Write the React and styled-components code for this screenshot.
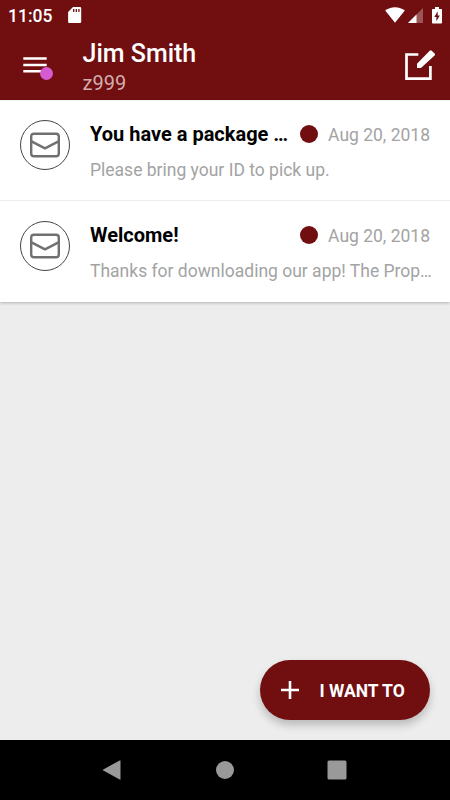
import React from "react";
import styled, { createGlobalStyle } from "styled-components";

const messages = [
  {
    id: 1,
    title: "You have a package …",
    date: "Aug 20, 2018",
    preview: "Please bring your ID to pick up.",
  },
  {
    id: 2,
    title: "Welcome!",
    date: "Aug 20, 2018",
    preview: "Thanks for downloading our app! The Prop…",
  },
];

export default function App() {
  return (
    <Screen>
      <GlobalStyle />
      <StatusBar>
        <Clock>11:05</Clock>
        <SdCardIcon />
        <StatusIcons>
          <WifiIcon />
          <SignalIcon />
          <BatteryIcon />
        </StatusIcons>
      </StatusBar>
      <Header>
        <MenuBtn aria-label="Menu">
          <MenuIcon />
          <MenuBadge />
        </MenuBtn>
        <User>
          <UserName>Jim Smith</UserName>
          <UserUnit>z999</UserUnit>
        </User>
        <ComposeBtn aria-label="Compose">
          <ComposeIcon />
        </ComposeBtn>
      </Header>
      <List>
        {messages.map((message) => (
          <Row key={message.id}>
            <Avatar>
              <MailIcon />
            </Avatar>
            <Content>
              <TitleLine>
                <Title>{message.title}</Title>
                <UnreadDot />
                <SentDate>{message.date}</SentDate>
              </TitleLine>
              <Preview>{message.preview}</Preview>
            </Content>
          </Row>
        ))}
      </List>
      <Body>
        <ActionBtn>
          <PlusIcon />
          <ActionLabel>I WANT TO</ActionLabel>
        </ActionBtn>
      </Body>
      <NavBar>
        <NavBtn aria-label="Back">
          <svg width="24" height="24" viewBox="0 0 24 24">
            <path d="M19.500 2.900V21.200q0 .8-.8.400L2.300 12.600q-.9-.6 0-1.200L18.700 2.400q.8-.3.8.5z" fill="#999" />
          </svg>
        </NavBtn>
        <NavBtn aria-label="Home">
          <svg width="24" height="24" viewBox="0 0 24 24">
            <circle cx="12" cy="12" r="9" fill="#999" />
          </svg>
        </NavBtn>
        <NavBtn aria-label="Recents">
          <svg width="24" height="24" viewBox="0 0 24 24">
            <rect x="2.500" y="2.500" width="19" height="19" rx="1.500" fill="#999" />
          </svg>
        </NavBtn>
      </NavBar>
    </Screen>
  );
}

function SdCardIcon() {
  return (
    <svg width="14" height="16" viewBox="0 0 14 16">
      <path d="M5 0H12a1.200 1.200 0 0 1 1.200 1.200V14.700a1.200 1.200 0 0 1-1.200 1.200H1.300a1.200 1.200 0 0 1-1.200-1.200V5z" fill="#fff" />
      <path d="M5.700 2v3M8.300 2v3M10.900 2v3" stroke="#710e10" strokeWidth="1.300" />
    </svg>
  );
}

function WifiIcon() {
  return (
    <svg width="20" height="16" viewBox="0 0 20 16">
      <path d="M10 15.700L.2 3.500C2.600 1.500 6.100.2 10 .2s7.400 1.300 9.800 3.300z" fill="#fff" />
    </svg>
  );
}

function SignalIcon() {
  return (
    <svg width="15" height="15" viewBox="0 0 15 15">
      <path d="M0 15L15 0v15z" fill="#fff" fillOpacity="0.300" />
      <path d="M0 15L8.500 6.500V15z" fill="#fff" />
    </svg>
  );
}

function BatteryIcon() {
  return (
    <svg width="10" height="17" viewBox="0 0 10 17">
      <path d="M3 0h4v1.900h2.200q.8 0 .8.800v13q0 .8-.8.800H.8q-.8 0-.8-.8v-13q0-.8.8-.8H3z" fill="#fff" />
      <path d="M5.700 4.300L2.300 10h2.100v4.300L7.800 8.500H5.700z" fill="#710e10" />
    </svg>
  );
}

function MenuIcon() {
  return (
    <svg width="24" height="16" viewBox="0 0 24 16">
      <path d="M.3 1.500h23.400M.3 8h23.400M.3 14.300h23.400" stroke="#fff" strokeWidth="2.600" />
    </svg>
  );
}

function ComposeIcon() {
  return (
    <svg width="32" height="32" viewBox="0 0 32 32">
      <path d="M14.300 4.500H2.500v24.200h23.900V16" fill="none" stroke="#fff" strokeWidth="2.700" />
      <path d="M13 13.700L25.700.8q1-.9 2 0L30.600 3.400q.9 1 0 2L17.500 17.500q-.6.500-1.400.5H13z" fill="#fff" />
    </svg>
  );
}

function MailIcon() {
  return (
    <svg width="30" height="26" viewBox="0 0 30 26">
      <rect x="1.200" y="1.700" width="27.600" height="22.600" rx="2.800" fill="none" stroke="#707070" strokeWidth="2.400" />
      <path d="M1 9.200L15 16.300 29 9.200" fill="none" stroke="#707070" strokeWidth="2.500" strokeLinejoin="round" />
    </svg>
  );
}

function PlusIcon() {
  return (
    <svg width="18" height="18" viewBox="0 0 18 18">
      <path d="M9 0v18M0 9h18" stroke="#fff" strokeWidth="2.600" />
    </svg>
  );
}

const GlobalStyle = createGlobalStyle`
  * {
    box-sizing: border-box;
  }
  body {
    margin: 0;
    font-family: Roboto, sans-serif;
  }
  svg {
    display: block;
    flex-shrink: 0;
  }
  button {
    border: 0;
    padding: 0;
    background: transparent;
    font-family: inherit;
  }
`;
const Screen = styled.div`
  display: flex;
  flex-direction: column;
  width: 450px;
  height: 800px;
  overflow: hidden;
  background-color: #ededed;
`;
const StatusBar = styled.div`
  display: flex;
  align-items: center;
  height: 30px;
  padding: 0 8px;
  background-color: #710e10;
`;
const Clock = styled.span`
  width: 60px;
  color: #fff;
  font-size: 17.500px;
  font-weight: 500;
  line-height: 30px;
  padding-top: 1px;
`;
const StatusIcons = styled.div`
  display: flex;
  align-items: center;
  gap: 3px;
  margin-left: auto;
  svg:last-child {
    margin-left: 6px;
  }
`;
const Header = styled.header`
  display: flex;
  height: 70px;
  padding: 0 14px 0 23px;
  background-color: #710e10;
`;
const MenuBtn = styled.button`
  display: flex;
  align-items: flex-start;
  position: relative;
  width: 30px;
  height: 24px;
  margin-top: 27px;
`;
const MenuBadge = styled.span`
  position: absolute;
  top: 10px;
  left: 17px;
  width: 13px;
  height: 13px;
  border-radius: 50%;
  background-color: #d65bd1;
`;
const User = styled.div`
  flex: 1;
  padding: 8px 0 0 29.500px;
`;
const UserName = styled.div`
  color: #fff;
  font-size: 25px;
  font-weight: 500;
  line-height: 32px;
`;
const UserUnit = styled.div`
  color: #d0aeae;
  font-size: 20px;
  line-height: 26px;
`;
const ComposeBtn = styled.button`
  width: 32px;
  height: 32px;
  margin-top: 20px;
`;
const List = styled.div`
  background-color: #fff;
  box-shadow: 0 1px 3px rgba(0, 0, 0, 0.25);
  border-top: 1px solid #f3f3f3;
`;
const Row = styled.div`
  display: flex;
  height: 99px;
  padding: 19px 14px 0 20px;
  & + & {
    height: 102px;
    padding-top: 20px;
    border-top: 1px solid #ececec;
  }
`;
const Avatar = styled.div`
  display: flex;
  align-items: center;
  justify-content: center;
  flex-shrink: 0;
  width: 50px;
  height: 50px;
  border: 1px solid #444;
  border-radius: 50%;
`;
const Content = styled.div`
  flex: 1;
  min-width: 0;
  padding-left: 20px;
`;
const TitleLine = styled.div`
  display: flex;
  align-items: center;
  height: 28px;
  padding-right: 6px;
`;
const Title = styled.div`
  flex: 1;
  min-width: 0;
  overflow: hidden;
  white-space: nowrap;
  text-overflow: ellipsis;
  color: #000;
  font-size: 20px;
  font-weight: 700;
  line-height: 28px;
`;
const UnreadDot = styled.span`
  flex-shrink: 0;
  width: 18px;
  height: 18px;
  margin: 0 10px 0 9px;
  border-radius: 50%;
  background-color: #710e10;
`;
const SentDate = styled.span`
  flex-shrink: 0;
  color: #a3a3a3;
  font-size: 17.500px;
  line-height: 28px;
  padding-top: 2px;
`;
const Preview = styled.div`
  margin-top: 9px;
  overflow: hidden;
  white-space: nowrap;
  text-overflow: ellipsis;
  color: #a3a3a3;
  font-size: 17.500px;
  line-height: 26px;
`;
const Body = styled.main`
  flex: 1;
  display: flex;
  align-items: flex-end;
  justify-content: flex-end;
  padding: 0 20px 20px 0;
`;
const ActionBtn = styled.button`
  display: flex;
  align-items: center;
  width: 170px;
  height: 60px;
  padding-left: 20.500px;
  border-radius: 30px;
  background-color: #710e10;
  box-shadow: 0 5px 9px rgba(0, 0, 0, 0.22);
`;
const ActionLabel = styled.span`
  margin-left: 21px;
  padding-top: 2px;
  color: #fff;
  font-size: 17.500px;
  font-weight: 700;
  white-space: nowrap;
`;
const NavBar = styled.nav`
  display: flex;
  align-items: center;
  justify-content: center;
  gap: 88.500px;
  height: 60px;
  background-color: #000;
  /* outer buttons sit half a pixel left of centre */
  button:last-child {
    margin-left: -1px;
    margin-right: 1px;
  }
`;
const NavBtn = styled.button`
  width: 24px;
  height: 24px;
`;
